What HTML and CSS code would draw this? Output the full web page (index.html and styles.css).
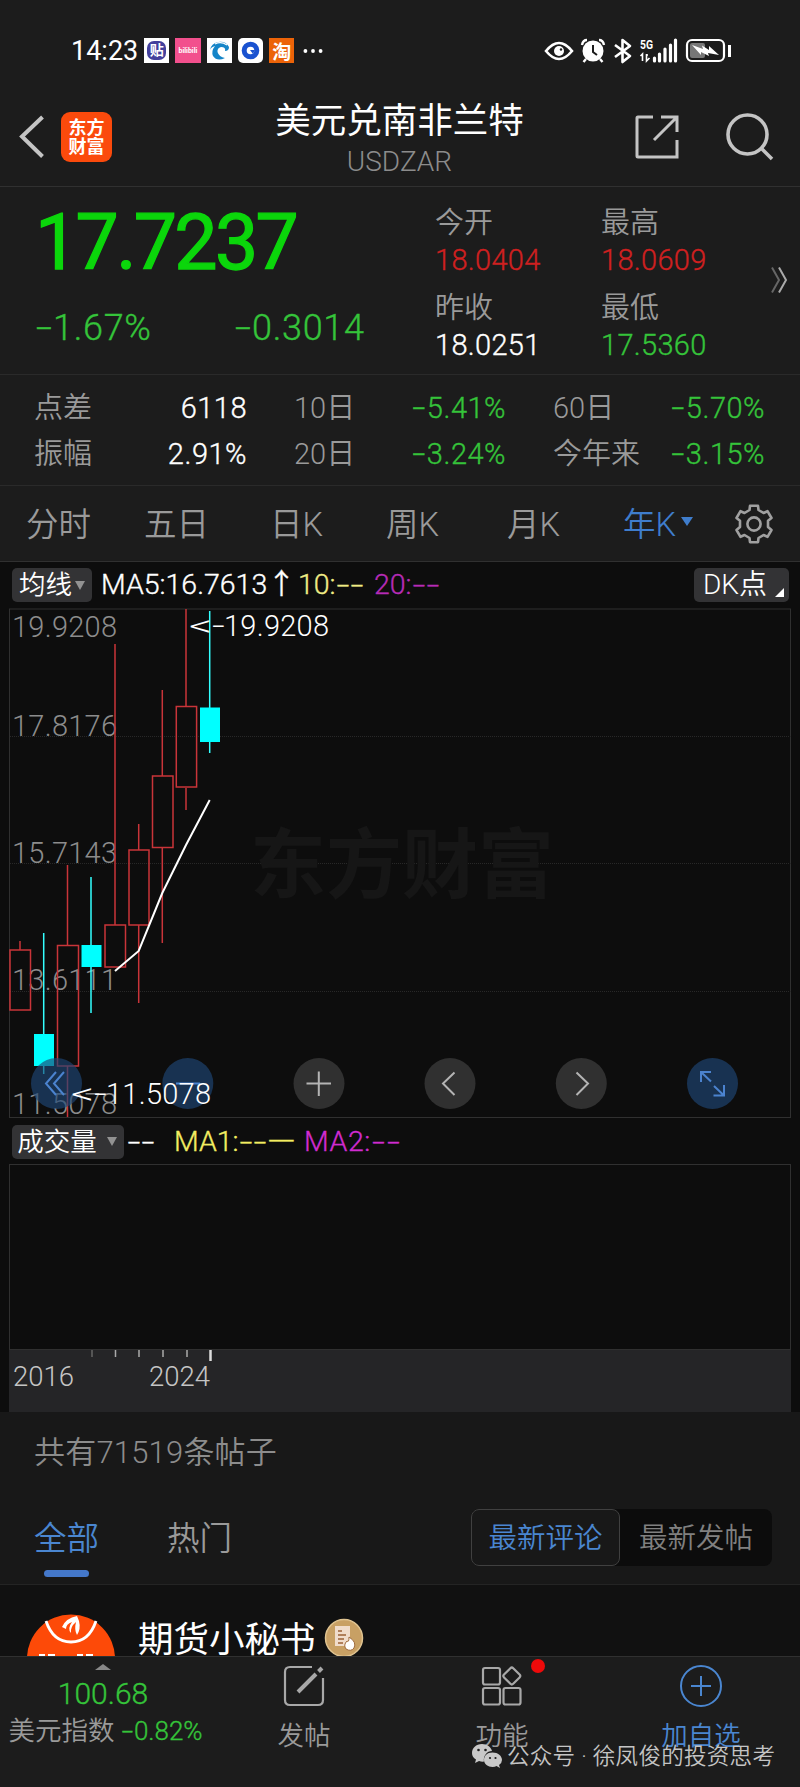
FILE: index.html
```html
<!DOCTYPE html>
<html lang="zh-CN">
<head>
  <meta charset="UTF-8">
  <meta name="viewport" content="width=device-width, initial-scale=1.0">
  <title>美元兑南非兰特 USDZAR</title>
  <link rel="stylesheet" href="styles.css">
</head>
<body>
  <div class="phone">
    <div class="status-bar">
      <span class="clock">14:23</span>
      <div class="app-icons">
        <span class="app app-tieba"><i>贴</i></span>
        <span class="app app-bili">bilibili</span>
        <span class="app"><svg width="25" height="25" viewBox="0 0 25 25"><path d="M3 12A10 9 0 0 1 22 9Q22 13 18 13Q19 9 14 9Q10 10 10.500 14Q12 19 18 20Q10 24 6 18Q4 13 8 8Q4 9 3 12Z" fill="#1585c8"/><path d="M8 6Q14 3 20 7" fill="none" stroke="#fff" stroke-width="1.200"/></svg></span>
        <span class="app app-round"><svg width="25" height="25" viewBox="0 0 25 25"><circle cx="12.5" cy="12.5" r="6.300" fill="none" stroke="#1a52d0" stroke-width="5"/><path d="M12 12h5l-2 4z" fill="#1a52d0"/></svg></span>
        <span class="app app-taobao">淘</span>
      </div>
      <svg class="dots" width="20" height="6" viewBox="0 0 20 6" fill="#fff"><circle cx="2.4" cy="3" r="1.9"/><circle cx="10" cy="3" r="1.9"/><circle cx="17.6" cy="3" r="1.9"/></svg>
      <svg class="status-icons" width="190" height="28" viewBox="0 0 190 28">
        <!-- eye -->
        <path d="M2 14Q15 -2 28 14Q15 30 2 14Z" fill="none" stroke="#fff" stroke-width="2.6"/>
        <circle cx="15" cy="14" r="5" fill="#fff"/><circle cx="17" cy="12.5" r="1.2" fill="#1c1c1c"/>
        <!-- alarm -->
        <circle cx="49" cy="14" r="10.5" fill="#fff"/>
        <path d="M38 8Q39 3 43 3M60 8Q59 3 55 3M42 22l-2.5 3M56 22l2.5 3" stroke="#fff" stroke-width="2.4" fill="none"/>
        <path d="M49 8v7l4 3" stroke="#1c1c1c" stroke-width="2" fill="none"/>
        <!-- bluetooth -->
        <path d="M71 8L86 19L78.500 25V3L86 9L71 20" fill="none" stroke="#fff" stroke-width="2.6" stroke-linejoin="round"/>
        <!-- signal -->
        <text x="96" y="12" class="net" textLength="13" lengthAdjust="spacingAndGlyphs">5G</text>
        <path d="M98.500 24v-7l-2 2M102.500 17v7l3-3M102 18h2" stroke="#fff" stroke-width="1.600" fill="none"/>
        <path d="M110.500 24v-3M115.500 24v-7M121 24V12M126.500 24V8M131.500 24V3" stroke="#fff" stroke-width="3.200" stroke-linecap="round"/>
        <!-- battery -->
        <rect x="143" y="3" width="37" height="21" rx="5" fill="none" stroke="#fff" stroke-width="2.200"/>
        <rect x="146" y="6" width="15" height="15" rx="2" fill="#777"/>
        <path d="M148 8L159 12L158 8.500L165 13L165 9L175 18L164 16L165 19L157 15L157 18Z" fill="#fff"/>
        <path d="M185.500 8v12" stroke="#fff" stroke-width="3"/>
      </svg>
    </div>

    <header class="header">
      <svg class="back" width="26" height="44" viewBox="0 0 26 44"><path d="M24.500 2L4 21.500L24.500 41.500" fill="none" stroke="#c4c4c4" stroke-width="4"/></svg>
      <div class="logo">东方<br>财富</div>
      <div class="title">
        <h1>美元兑南非兰特</h1>
        <p>USDZAR</p>
      </div>
      <svg class="share" width="46" height="46" viewBox="0 0 46 46" fill="none" stroke="#c4c4c4" stroke-width="3"><path d="M19 3H4Q3 3 3 4V42Q3 43 4 43H43V26M27 3H43V18M43 3L20 26"/></svg>
      <svg class="search" width="50" height="50" viewBox="0 0 50 50" fill="none" stroke="#c4c4c4" stroke-width="3.600"><circle cx="22.500" cy="22.500" r="19.500"/><path d="M36 36L47 47"/></svg>
    </header>

    <section class="quote">
      <div class="price">
        <div class="last">17.7237</div>
        <div class="change"><span><i class="minus">-</i>1.67%</span><span><i class="minus">-</i>0.3014</span></div>
      </div>
      <dl class="ohlc">
        <div><dt>今开</dt><dd class="up">18.0404</dd></div>
        <div><dt>最高</dt><dd class="up">18.0609</dd></div>
        <div><dt>昨收</dt><dd>18.0251</dd></div>
        <div><dt>最低</dt><dd class="down">17.5360</dd></div>
      </dl>
      <svg class="more" width="18" height="28" viewBox="0 0 18 28" fill="none" stroke-width="2"><path d="M2 1.500L9 14L2 26.500" stroke="#666"/><path d="M9 1.500L16 14L9 26.500" stroke="#aaa"/></svg>
    </section>

    <section class="stats">
      <span>点差</span><b>6118</b><span>10日</span><b class="down"><i class="minus">-</i>5.41%</b><span>60日</span><b class="down"><i class="minus">-</i>5.70%</b>
      <span>振幅</span><b>2.91%</b><span>20日</span><b class="down"><i class="minus">-</i>3.24%</b><span>今年来</span><b class="down"><i class="minus">-</i>3.15%</b>
    </section>

    <nav class="periods">
      <span>分时</span>
      <span>五日</span>
      <span>日K</span>
      <span>周K</span>
      <span>月K</span>
      <span class="active">年K<i></i></span>
      <svg width="40" height="40" viewBox="0 0 40 40" fill="none" stroke="#a0a0a0" stroke-width="2.600" stroke-linejoin="round"><path d="M15.500 6L16 1.800H24L24.500 6L29.500 9L33.500 7.200L37.500 14L34 16.800V23L37.500 26L33.500 32.800L29.500 31L24.500 34L24 38.200H16L15.500 34L10.500 31L6.500 32.800L2.500 26L6 23V16.800L2.500 14L6.500 7.200L10.500 9Z"/><circle cx="20" cy="20" r="6.600"/></svg>
    </nav>

    <section class="chart">
      <div class="indicator">
        <span class="chip">均线<i></i></span>
        <span class="ma5">MA5:16.7613↑</span>
        <span class="ma10">10:<i class="minus">-</i><i class="minus">-</i></span>
        <span class="ma20">20:<i class="minus">-</i><i class="minus">-</i></span>
        <span class="chip dk">DK点<i></i></span>
      </div>

      <!-- x is 9px from the left edge, y starts at the top of the plot -->
      <svg class="kline" width="783" height="511" viewBox="9 608 783 511">
        <rect x="9.500" y="609" width="781" height="508.500" fill="none" stroke="#303030"/>
        <path d="M10 736.500H791M10 863.500H791M10 991.500H791" stroke="#282828" stroke-dasharray="1 1"/>
        <text class="brand" x="250" y="892" textLength="304">东方财富</text>
        <g class="axis">
          <text x="12" y="637" textLength="105">19.9208</text>
          <text x="12" y="736" textLength="105">17.8176</text>
          <text x="12" y="863" textLength="105">15.7143</text>
          <text x="12" y="990" textLength="105">13.6111</text>
          <text x="12" y="1114" textLength="105">11.5078</text>
        </g>
        <g class="rise">
          <path d="M20 941V950M67.500 865V945M67.500 1066V1117M115 644V925M138.700 824V850M138.700 925V1003M162.300 690V776M162.300 848V943M186 609V706M186 788V810"/>
          <rect x="10" y="950" width="20.500" height="60"/>
          <rect x="57.500" y="945.500" width="21" height="120.500"/>
          <rect x="105" y="925" width="20.500" height="42"/>
          <rect x="129" y="850" width="20" height="75"/>
          <rect x="152.500" y="776" width="20.500" height="71.500"/>
          <rect x="176.300" y="706.500" width="20.300" height="80.500"/>
        </g>
        <g class="fall">
          <path d="M43.700 933V1074M91 877V1013M209.700 611V753"/>
          <rect x="34" y="1034" width="20" height="32"/>
          <rect x="81.500" y="945" width="20" height="22"/>
          <rect x="200" y="707.500" width="20" height="34.500"/>
        </g>
        <polyline points="115,971 138.700,951 162.300,893 186,845 209.700,800" fill="none" stroke="#fff" stroke-width="2"/>
        <g class="tools">
          <circle class="blue" cx="56.500" cy="1083.500" r="25.500"/>
          <circle class="blue" cx="187.800" cy="1083.500" r="25.500"/>
          <circle class="grey" cx="319" cy="1083.500" r="25.500"/>
          <circle class="grey" cx="450" cy="1083.500" r="25.500"/>
          <circle class="grey" cx="581.300" cy="1083.500" r="25.500"/>
          <circle class="blue" cx="712.500" cy="1083.500" r="25.500"/>
          <path class="blue-line" d="M56 1072L46 1083.500L56 1095M64 1072L54 1083.500L64 1095M176 1083.500H200M701 1082V1072H711M701 1072L711 1081.500M724 1085V1095.500H713.500M724 1095.500L714 1086"/>
          <path class="grey-line" d="M306.500 1083.500H331M318.800 1071.500V1096M454.500 1072.500L443 1083.500L454.500 1095M576.500 1072.500L588 1083.500L576.500 1095"/>
        </g>
        <g class="mark">
          <text x="189" y="636" textLength="36" lengthAdjust="spacingAndGlyphs">&lt;-</text>
          <text x="224" y="636" textLength="105">19.9208</text>
          <text x="71" y="1104" textLength="36" lengthAdjust="spacingAndGlyphs">&lt;-</text>
          <text x="106" y="1104" textLength="105">11.5078</text>
        </g>
      </svg>

      <div class="indicator volume-row">
        <span class="chip vol">成交量<i></i></span>
        <span class="v0"><i class="minus">-</i><i class="minus">-</i></span>
        <span class="v1">MA1:<i class="minus">-</i><i class="minus">-</i><i class="long">—</i></span>
        <span class="v2">MA2:<i class="minus">-</i><i class="minus">-</i></span>
      </div>
      <div class="volume"></div>
      <div class="timeline">
        <svg width="300" height="12" viewBox="9 1350 300 12" fill="none" stroke="#aaa" stroke-width="1.500"><path d="M92 1350v7" stroke="#666"/><path d="M115.500 1350v7M139 1350v7M163 1350v7M187 1350v7"/><path d="M210.500 1350v11" stroke="#ddd" stroke-width="2.500"/></svg>
        <div class="years"><span>2016</span><span>2024</span></div>
      </div>
    </section>

    <section class="posts">
      <p class="count">共有71519条帖子</p>
      <div class="post-tabs">
        <span class="active">全部</span>
        <span>热门</span>
        <div class="sort"><span class="on">最新评论</span><span>最新发帖</span></div>
      </div>
    </section>

    <section class="feed">
      <svg class="avatar" width="90" height="43" viewBox="0 0 90 43">
        <circle cx="45" cy="45.500" r="44" fill="#fd4a08"/>
        <path d="M20 8Q27 29 45 29Q63 29 70 8" fill="none" stroke="#fff" stroke-width="2.800"/>
        <path d="M36 14Q40 5 51 3L53 8Q55 16 51 22Q48 17 50 9Q44 14 45 20Q41 16 46 9Q40 11 40 16Z" fill="#fff"/>
        <path d="M13 42h6M22 42h7M51 42h6M60 42h7" stroke="#fff" stroke-width="2"/>
      </svg>
      <span class="name">期货小秘书</span>
      <svg class="badge" width="40" height="40" viewBox="0 0 40 40"><circle cx="20" cy="20" r="18.500" fill="#c8a064" stroke="#e0c491" stroke-width="1.500"/><path d="M11 8h15v12l-4 8H11z" fill="#f0dccb"/><path d="M14 13h4M14 17h8M14 21h6M14 25h5" stroke="#9b6138" stroke-width="1.500"/><path d="M25 19Q33 24 30 30Q27 34 22 31Q19 27 23 23Q25 25 25 19Z" fill="#fff" stroke="#a06c3f"/></svg>
    </section>

    <footer class="bottom-bar">
      <div class="index">
        <svg width="16" height="6" viewBox="0 0 16 6"><path d="M0 6L8 0L16 6Z" fill="#888"/></svg>
        <strong>100.68</strong>
        <p>美元指数 <em><i class="minus">-</i>0.82%</em></p>
      </div>
      <div class="action">
        <svg width="44" height="44" viewBox="0 0 44 44" fill="none" stroke="#a8a8a8" stroke-width="2.200"><path d="M30 3H8Q3 3 3 8V36Q3 41 8 41H36Q41 41 41 36V14"/><path d="M16 28L34 10M36.500 7.500L40 4" stroke-width="4"/></svg>
        <span>发帖</span>
      </div>
      <div class="action">
        <svg width="44" height="44" viewBox="0 0 44 44" fill="none" stroke="#a8a8a8" stroke-width="2.200"><rect x="3" y="4" width="17" height="16.500" rx="2"/><rect x="3" y="24" width="17" height="16.500" rx="2"/><rect x="23.500" y="24" width="17" height="16.500" rx="2"/><rect x="25.300" y="5.500" width="13" height="13" rx="2" transform="rotate(45 31.800 12)"/></svg>
        <span>功能</span>
        <i class="red-dot"></i>
      </div>
      <div class="action add">
        <svg width="44" height="44" viewBox="0 0 44 44" fill="none" stroke="#4a86d0" stroke-width="2"><circle cx="22" cy="22" r="20"/><path d="M12 22H32M22 12V32"/></svg>
        <span>加自选</span>
      </div>
      <div class="wechat">
        <svg width="32" height="27" viewBox="0 0 32 27"><path d="M11 1C5 1 1 5 1 10Q1 14 5 16.500L4 20L8 18Q11 19 13 18.500C12 13 16 8 21 8C20 4 16 1 11 1Z" fill="#c8c8c8"/><path d="M21.500 9.500C16 9.500 13 13 13 17S17 24 21.500 24Q24 24 25.500 23L29 25L28 22Q31 20 31 17C31 13 27 9.500 21.500 9.500Z" fill="#c8c8c8"/><g fill="#1c1c1c"><circle cx="7.500" cy="7" r="1.300"/><circle cx="14.500" cy="7" r="1.300"/><circle cx="19" cy="15" r="1.100"/><circle cx="24.500" cy="15" r="1.100"/></g></svg>
        <span>公众号 · 徐凤俊的投资思考</span>
      </div>
    </footer>
  </div>
</body>
</html>
```
FILE: styles.css
```css
* {
  box-sizing: border-box;
}

body {
  margin: 0;
  background-color: #1c1c1c;
  color: #fff;
  font-family: Roboto, "Noto Sans CJK SC", sans-serif;
  font-weight: 350;
}

h1, p, dl, dd {
  margin: 0;
}

i, em {
  font-style: normal;
}

svg {
  display: block;
  flex: none;
}

.phone {
  width: 800px;
  height: 1787px;
  overflow: hidden;
}

.up { color: #cf2020; }
.down { color: #35c43a; }

/* Wide minus sign used in all the numbers */
.minus {
  display: inline-block;
  width: 0.5em;
  letter-spacing: 0;
  text-align: center;
  transform: scaleX(1.6);
}

/* Light digits come out too thin next to the Chinese text */
.change,
.ohlc dd,
.stats b,
.index strong,
.index em,
.ma5,
.ma10,
.ma20,
.v0,
.v1,
.v2,
.axis,
.mark {
  -webkit-text-stroke: 0.35px currentColor;
}

/* Status bar */
.status-bar {
  display: flex;
  align-items: center;
  height: 88px;
  padding: 13px 67px 0 71px;
}

.clock {
  width: 73px;
  font-size: 27px;
  font-weight: 400;
}

.app-icons {
  display: flex;
  gap: 6px;
}

.app {
  display: flex;
  align-items: center;
  justify-content: center;
  width: 25.3px;
  height: 25px;
  background: #fff;
  overflow: hidden;
}

.app-tieba i {
  width: 19px;
  height: 19px;
  border-radius: 7px;
  background: #43409c;
  font-size: 14px;
  font-weight: 700;
  line-height: 18px;
  text-align: center;
}

.app-bili {
  background: #f2508d;
  font-size: 7px;
  font-weight: 700;
}

.app-round {
  border-radius: 5px;
}

.app-taobao {
  background: #ec6308;
  font-size: 19px;
  font-weight: 700;
}

.dots {
  margin-left: 9px;
}

.status-icons {
  margin-left: auto;
  margin-right: -1px;
}

.net {
  fill: #fff;
  font-size: 13px;
  font-weight: 700;
}

/* Header */
.header {
  display: flex;
  align-items: center;
  height: 99px;
  padding: 0 25px 0 18px;
  border-bottom: 1px solid #303030;
}

.logo {
  width: 51px;
  height: 50px;
  margin: 0 0 1px 17px;
  padding-top: 6px;
  border-radius: 9px;
  background: #fb4a0c;
  font-size: 18px;
  font-weight: 700;
  line-height: 19px;
  text-align: center;
}

.title {
  flex: 1;
  padding: 3px 0 0 53px;
  text-align: center;
}

.title h1 {
  font-size: 35.5px;
  font-weight: 400;
  line-height: 46px;
}

.title p {
  color: #8c8c8c;
  font-size: 28px;
  line-height: 36px;
}

.share {
  margin-right: 45px;
}

/* Quote */
.quote {
  display: flex;
  height: 188px;
  padding-left: 35px;
  border-bottom: 1px solid #2a2a2a;
}

.price {
  width: 400px;
}

.last {
  margin-top: 12px;
  color: #0bd60b;
  font-size: 77px;
  font-weight: 400;
  letter-spacing: -2.700px;
  line-height: 88px;
  -webkit-text-stroke: 1.3px #0bd60b;
}

.change {
  display: flex;
  margin-top: 20px;
  color: #35c43a;
  font-size: 36px;
  line-height: 42px;
}

.change span {
  width: 199px;
  letter-spacing: 0.700px;
}

.ohlc {
  display: grid;
  grid-template-columns: 166px 166px;
  grid-auto-rows: 84.500px;
  padding-top: 19px;
  font-size: 29px;
}

.ohlc dt {
  height: 34px;
  color: #9a9a9a;
  line-height: 34px;
}

.ohlc dd {
  letter-spacing: 0.300px;
  line-height: 40px;
}

.more {
  margin: 79px 0 0 3px;
}

/* Stats */
.stats {
  display: grid;
  grid-template-columns: 88px 172px 90px 169px 90px 122px;
  grid-auto-rows: 46px;
  height: 111px;
  padding: 10px 34px 0;
  border-bottom: 1px solid #2a2a2a;
  font-size: 29px;
  line-height: 46px;
}

.stats span {
  color: #9a9a9a;
  white-space: nowrap;
}

.stats b {
  padding-right: 47px;
  font-weight: 350;
  letter-spacing: 0.500px;
  text-align: right;
}

.stats b:nth-child(6n) {
  padding-right: 0;
}

.stats .minus {
  width: 0.550em;
}

/* Period tabs */
.periods {
  display: grid;
  grid-template-columns: 118px 126px 116px 121px 116px 111px 40px;
  align-items: center;
  height: 76px;
  padding: 0 0 0 26px;
  border-bottom: 1px solid #303030;
  color: #9a9a9a;
  font-size: 32.500px;
}

.periods span {
  margin-top: -4px;
}

.periods .active {
  display: flex;
  align-items: center;
  color: #3f7dcc;
}

.periods .active i {
  margin-left: 5px;
  border: 6px solid transparent;
  border-top: 9px solid #3f7dcc;
  border-bottom: 0;
}

/* Chart */
.chart {
  height: 850px;
  background: #0d0d0d;
}

.indicator {
  display: flex;
  align-items: center;
  height: 46px;
  padding: 0 11px 0 12px;
  font-size: 28.500px;
  line-height: 36px;
  white-space: nowrap;
}

.chip {
  display: flex;
  align-items: center;
  justify-content: center;
  height: 34px;
  width: 80px;
  border-radius: 5px;
  background: #333335;
  font-size: 26.500px;
  line-height: 32px;
}

.chip i {
  margin-left: 3px;
  border: 5px solid transparent;
  border-top: 9px solid #929292;
  border-bottom: 0;
}

.chip.dk {
  width: 95px;
  margin-left: auto;
  font-size: 28px;
}

.chip.dk i {
  align-self: flex-end;
  margin: 0 -4px 5px 8px;
  border: 0;
  border-left: 9px solid transparent;
  border-bottom: 9px solid #fff;
}

.ma5 {
  width: 188px;
  height: 37px;
  margin-left: 9px;
}

.ma10 {
  width: 76px;
  margin-left: 9px;
  color: #f0ec86;
}

.ma20 {
  color: #b62bb6;
}

.kline {
  margin-left: 9px;
  font-size: 29px;
}

.kline .brand {
  fill: #161616;
  font-size: 76px;
  font-weight: 700;
}

.kline .axis {
  color: #8c8c8c;
  fill: #8c8c8c;
}

.kline .mark {
  fill: #fff;
}

.rise {
  fill: none;
  stroke: #c93439;
  stroke-width: 1.500;
}

.fall {
  fill: #00ffff;
}

.fall path {
  stroke: #3ff;
  stroke-width: 1.500;
}

.tools .blue {
  fill: #1f4677;
  fill-opacity: 0.650;
}

.tools .grey {
  fill: #303030;
}

.tools path {
  fill: none;
  stroke-width: 2;
}

.tools .blue-line { stroke: #4b83cf; }
.tools .grey-line { stroke: #b4b4b4; }

.volume-row {
  height: 45px;
}

.chip.vol {
  width: 112px;
  padding-right: 2px;
}

.chip.vol i {
  margin-left: 10px;
}

.v0 {
  width: 47px;
  margin-left: 3px;
}

.v1 {
  width: 130px;
  color: #f3ed62;
}

.long {
  display: inline-block;
  transform: scaleX(1.3);
  transform-origin: left;
}

.v2 {
  color: #d02bd0;
  letter-spacing: 0.600px;
}

.v2 .minus {
  width: 0.530em;
}

.volume {
  height: 186px;
  margin: 0 9px;
  border: 1px solid #303030;
}

.timeline {
  height: 62px;
  margin: 0 9px;
  background: #252527;
}

.years {
  display: flex;
  gap: 75px;
  padding-left: 4px;
  color: #c5c5c5;
  font-size: 27.500px;
  line-height: 30px;
}

/* Posts */
.posts {
  height: 173px;
  background: #181818;
  border-bottom: 1px solid #242424;
}

.count {
  padding: 18px 0 0 34px;
  color: #8c8c8c;
  font-size: 31px;
  letter-spacing: 0.200px;
  line-height: 46px;
}

.post-tabs {
  display: flex;
  align-items: center;
  height: 58px;
  margin-top: 32px;
  padding: 0 28px 0 34px;
  color: #9a9a9a;
  font-size: 32.500px;
}

.post-tabs > span {
  width: 133px;
  margin-top: -4px;
}

.post-tabs > .active {
  position: relative;
  color: #4a86d0;
}

.post-tabs > .active::after {
  content: "";
  position: absolute;
  left: 10px;
  bottom: -18px;
  width: 45px;
  height: 7px;
  border-radius: 4px;
  background: #4478ca;
}

.sort {
  display: flex;
  margin-left: auto;
  border-radius: 8px;
  background: #0c0c0c;
  font-size: 28.500px;
}

.sort span {
  width: 152px;
  height: 57px;
  border-radius: 8px;
  color: #808080;
  line-height: 59px;
  text-align: center;
}

.sort .on {
  width: 149px;
  border: 1.500px solid #404040;
  background: #181818;
  color: #4a86d0;
  line-height: 57px;
}

/* Feed */
.feed {
  display: flex;
  height: 71px;
  padding-left: 26px;
  background: #111;
  overflow: hidden;
}

.avatar {
  margin-top: 28px;
}

.name {
  margin-left: 22px;
  font-size: 35.500px;
  font-weight: 400;
  line-height: 110px;
}

.badge {
  margin: 33px 0 0 8px;
}

/* Bottom bar */
.bottom-bar {
  position: relative;
  display: grid;
  grid-template-columns: 206px 196px 200px 198px;
  height: 131px;
  border-top: 1px solid #303030;
  background: #1c1c1c;
  color: #9a9a9a;
  font-size: 26.500px;
}

.index {
  display: flex;
  flex-direction: column;
  align-items: center;
  padding-top: 7px;
}

.index strong {
  margin-top: 7px;
  color: #35c43a;
  font-size: 30px;
  font-weight: 350;
  line-height: 34px;
}

.index p {
  line-height: 38px;
  margin-top: 1px;
  padding-left: 5px;
  white-space: nowrap;
}

.index em {
  color: #35c43a;
  font-size: 26px;
}

.action {
  position: relative;
  display: flex;
  flex-direction: column;
  align-items: center;
  padding-top: 7px;
}

.action span {
  margin-top: 8px;
  line-height: 40px;
}

.add {
  color: #4a86d0;
}

.red-dot {
  position: absolute;
  left: 129px;
  top: 2px;
  width: 14px;
  height: 14px;
  border-radius: 50%;
  background: #ee0a0a;
}

.wechat {
  position: absolute;
  left: 471px;
  top: 85px;
  display: flex;
  align-items: center;
  gap: 4px;
  color: #c4c4c4;
  font-size: 22.500px;
  letter-spacing: 0.300px;
  line-height: 28px;
  white-space: nowrap;
}
```
